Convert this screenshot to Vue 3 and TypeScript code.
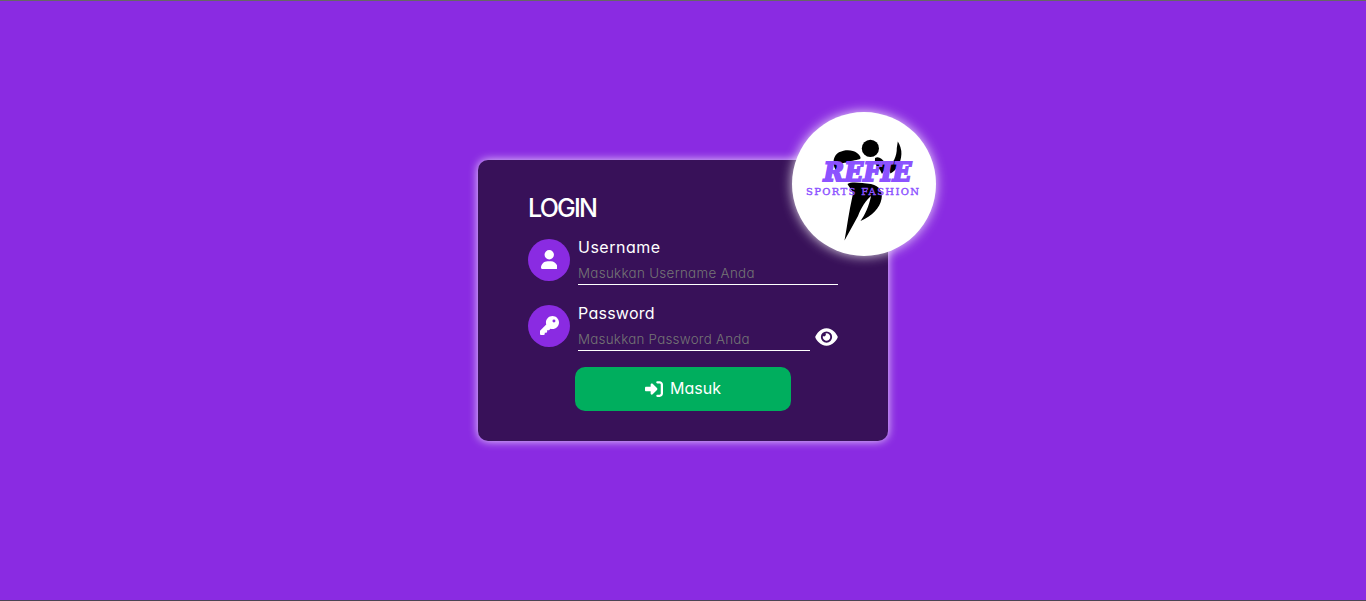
<script setup lang="ts">
import { ref } from 'vue'

const username = ref('')
const password = ref('')
const visible = ref(false)
</script>

<template>
  <main class="page">
    <form class="card" @submit.prevent>
      <div class="logo">
        <svg viewBox="0 0 144 144" width="144" height="144">
          <circle cx="78.4" cy="36.4" r="8.6" />
          <path d="M43.500 58C39.500 50 42 43 47 40.300C54 37 61 38 65 41Q69 44 68.500 46.500C66 48.500 60 48 55 50.500C48 51 45.500 53 45.300 57Z" />
          <path d="M83 46C87 44 90 47 92.500 50L94 56L90 62Q88 57 84.500 54Q82 50 83 46Z" />
          <path d="M105.800 29.500Q109.500 35 109.400 42C109 51 105 58 98.500 61.500L96 55C101 52 105 44 104.800 36Z" />
          <path d="M55.500 72C60 69 69 71 79 72C88 74 91 80 89.500 87C88 96 80 104 68.500 109C73 103 77 94 79 84C74 88 69 96 66 104Q60 115 52.500 128.500C55 115 57 99 60.500 84C62 79 58 77 55.500 72Z" />
          <text class="brand" x="31.500" y="68.500" textLength="88" lengthAdjust="spacingAndGlyphs">REFIE</text>
          <text class="tag" x="14" y="83.300" textLength="113" lengthAdjust="spacing">SPORTS FASHION</text>
        </svg>
      </div>

      <h1>LOGIN</h1>

      <div class="field">
        <span class="badge">
          <svg viewBox="0 0 448 512" width="16.500" height="19"><path d="M224 256A128 128 0 1 0 224 0a128 128 0 1 0 0 256zm-45.700 48C79.800 304 0 383.800 0 482.300C0 498.700 13.300 512 29.700 512H418.300c16.400 0 29.700-13.300 29.700-29.700C448 383.800 368.200 304 269.700 304H178.300z" /></svg>
        </span>
        <div class="entry">
          <label class="user-label" for="username">Username</label>
          <input id="username" v-model="username" class="user-input" type="text" placeholder="Masukkan Username Anda" />
        </div>
      </div>

      <div class="field">
        <span class="badge">
          <svg viewBox="0 0 512 512" width="19" height="19"><path d="M336 352c97.200 0 176-78.800 176-176S433.200 0 336 0S160 78.800 160 176c0 18.700 2.900 36.800 8.300 53.700L7 391c-4.500 4.500-7 10.600-7 17v80c0 13.300 10.700 24 24 24h80c13.300 0 24-10.700 24-24V448h40c13.300 0 24-10.700 24-24V384h40c6.400 0 12.500-2.500 17-7l33.300-33.300c16.900 5.400 35 8.300 53.700 8.300zM376 96a40 40 0 1 1 0 80 40 40 0 1 1 0-80z" /></svg>
        </span>
        <div class="entry">
          <label class="pass-label" for="password">Password</label>
          <input id="password" v-model="password" class="pass-input" :type="visible ? 'text' : 'password'" placeholder="Masukkan Password Anda" />
        </div>
        <button class="eye" type="button" aria-label="Password" @click="visible = !visible">
          <svg viewBox="0 0 576 512" width="23" height="20"><path fill-rule="evenodd" d="M288 32c-80.800 0-145.500 36.800-192.600 80.600C48.600 156 17.300 208 2.500 243.700c-3.300 7.900-3.300 16.700 0 24.600C17.300 304 48.600 356 95.400 399.400C142.500 443.200 207.200 480 288 480s145.500-36.800 192.600-80.600c46.800-43.500 78.100-95.400 93-131.100c3.300-7.900 3.300-16.700 0-24.600c-14.900-35.700-46.200-87.700-93-131.100C433.500 68.800 368.800 32 288 32zM144 256a144 144 0 1 1 288 0 144 144 0 1 1-288 0zM288 160a95.300 95.300 0 0 0-25.300 3.800 47.850 47.850 0 0 1-66.900 66.900A95.780 95.780 0 1 0 288 160z" /></svg>
        </button>
      </div>

      <button class="submit" type="submit">
        <svg viewBox="0 0 512 512" width="18" height="18"><path d="M217.900 105.900L340.700 228.700c7.200 7.200 11.300 17.100 11.300 27.300s-4.100 20.100-11.300 27.300L217.900 406.100c-6.400 6.400-15 9.900-24 9.900c-18.700 0-33.900-15.200-33.900-33.900V320H32c-17.700 0-32-14.300-32-32V224c0-17.700 14.300-32 32-32H160V129.900c0-18.700 15.200-33.900 33.900-33.900c9 0 17.600 3.600 24 9.900zM352 416h64c17.700 0 32-14.300 32-32V128c0-17.700-14.300-32-32-32H352c-17.700 0-32-14.300-32-32s14.300-32 32-32h64c53 0 96 43 96 96V384c0 53-43 96-96 96H352c-17.700 0-32-14.300-32-32s14.300-32 32-32z" /></svg>
        <span>Masuk</span>
      </button>
    </form>
  </main>
</template>

<style>
body {
  background: #8a2be2;
}
</style>

<style scoped>
.page {
  box-sizing: border-box;
  height: 601px;
  display: flex;
  align-items: center;
  justify-content: center;
  border-top: 1px solid #666;
  border-bottom: 1px solid #4b4453;
  background: #8a2be2;
  font-family: Inter, "Open Sans", sans-serif;
  font-feature-settings: "cv11" 1;
  color: #fff;
}
.card {
  position: relative;
  box-sizing: border-box;
  width: 410px;
  height: 281px;
  padding: 30px 50px;
  border-radius: 10px;
  background: #381159;
  box-shadow: 0 0 10px rgba(255, 255, 255, 0.8);
}
.logo {
  position: absolute;
  top: -48px;
  right: -48px;
  width: 144px;
  height: 144px;
  border-radius: 50%;
  background: #fff;
  box-shadow: 0 0 12px rgba(255, 255, 255, 0.85);
}
.logo svg,
.badge svg,
.eye svg,
.submit svg {
  display: block;
}
.brand {
  font: italic 900 26px "DejaVu Serif", serif;
  fill: #8c52ff;
  stroke: #8c52ff;
  stroke-width: 1.8px;
}
.tag {
  font: 10px "DejaVu Serif", serif;
  fill: #8c52ff;
  stroke: #8c52ff;
  stroke-width: 0.4px;
}
h1 {
  margin: 0 0 13px;
  height: 36px;
  font-size: 25px;
  line-height: 36px;
  font-weight: 550;
  letter-spacing: -1.75px;
}
.field {
  display: flex;
  height: 46px;
  margin-bottom: 20px;
}
.badge {
  box-sizing: border-box;
  display: flex;
  flex: none;
  align-items: center;
  justify-content: center;
  width: 42px;
  height: 42px;
  margin-right: 8px;
  padding-bottom: 2px;
  border-radius: 50%;
  background: #8a2be2;
}
svg {
  flex: none;
}
.badge svg,
.eye svg,
.submit svg {
  fill: #fff;
}
.entry {
  display: flex;
  flex: 1;
  flex-direction: column;
  min-width: 0;
}
label {
  height: 24px;
  margin-top: -4px;
  font-size: 16px;
  line-height: 24px;
}
.user-label {
  letter-spacing: 0.5px;
}
.pass-label {
  letter-spacing: 0.25px;
}
input {
  box-sizing: border-box;
  width: 100%;
  height: 26px;
  padding: 2px 0 0;
  border: 0;
  border-bottom: 1px solid #fff;
  outline: 0;
  background: transparent;
  color: #fff;
  font: 300 13.333px Inter, "Open Sans", sans-serif;
  font-feature-settings: "cv11" 1;
}
.user-input {
  letter-spacing: 0.34px;
}
.pass-input {
  letter-spacing: 0.27px;
}
input::placeholder {
  color: #757575;
  opacity: 1;
}
.eye {
  align-self: flex-start;
  margin: 22px 0 0 5px;
  padding: 0;
  border: 0;
  background: none;
}
.submit {
  display: flex;
  align-items: center;
  justify-content: center;
  gap: 7px;
  width: 216px;
  height: 44px;
  margin: -4px auto 0;
  padding: 0;
  border: 0;
  border-radius: 10px;
  background: #00ae5e;
  color: #fff;
  font: 400 16px Inter, "Open Sans", sans-serif;
  font-feature-settings: "cv11" 1;
}
.submit span {
  margin-top: -2px;
}
</style>
